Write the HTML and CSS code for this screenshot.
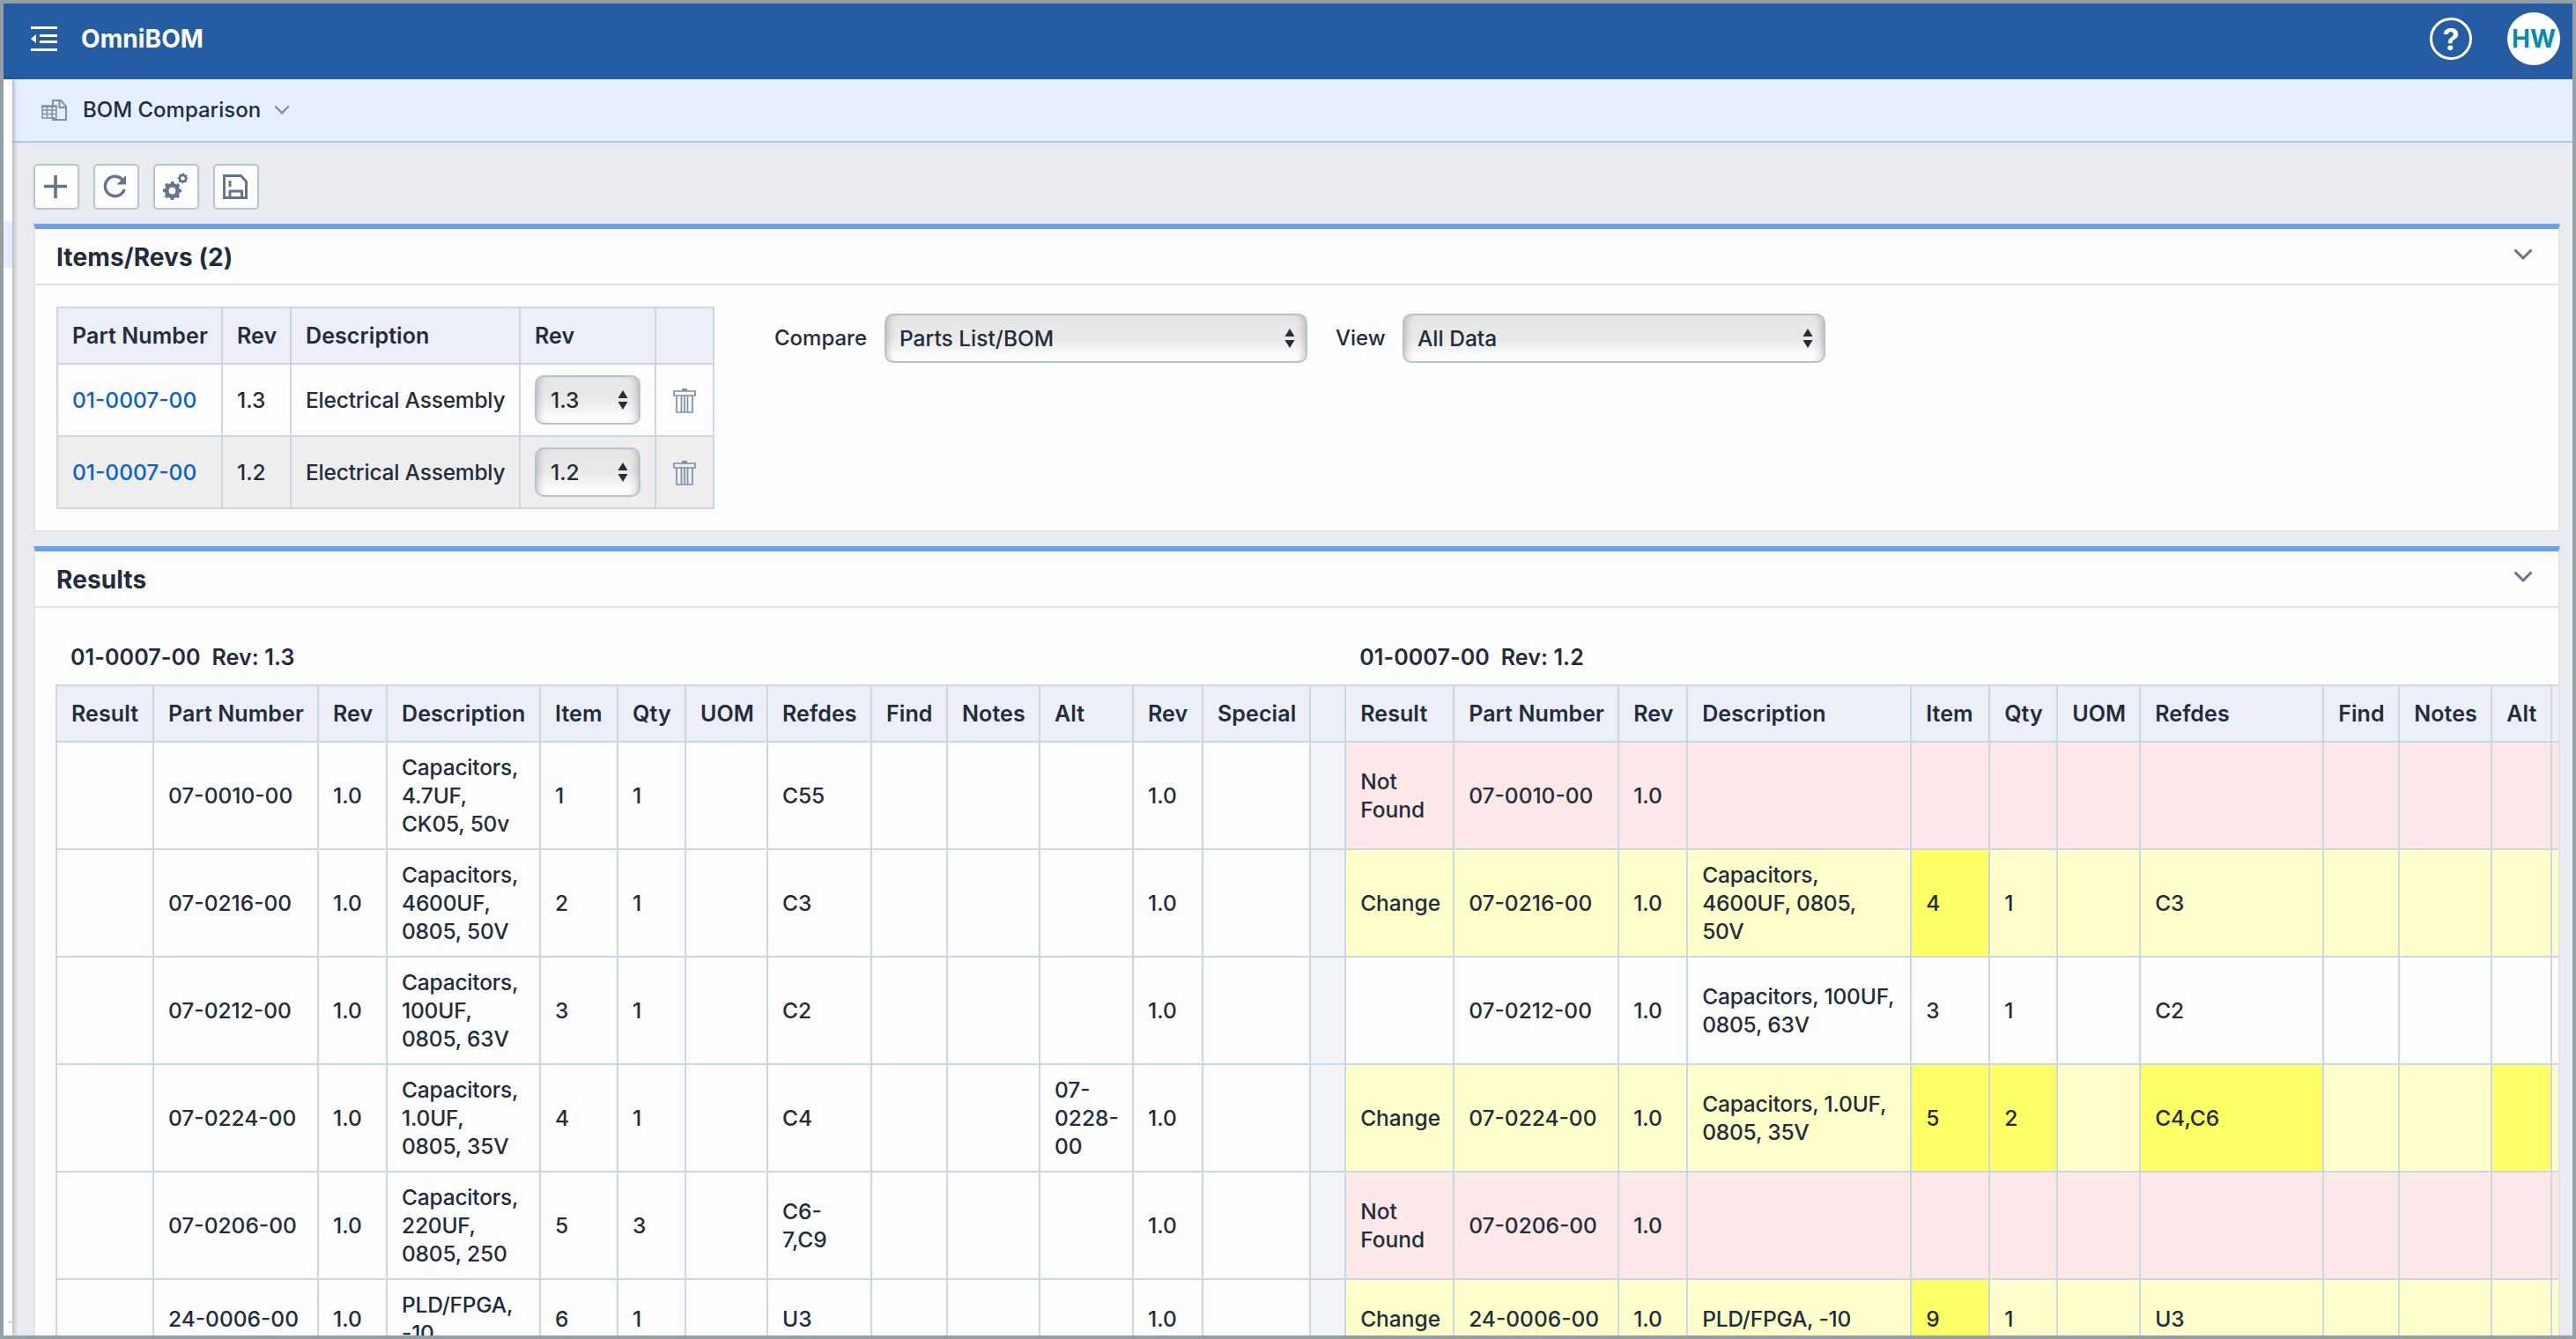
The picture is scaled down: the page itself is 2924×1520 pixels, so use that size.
FILE: index.html
```html
<!DOCTYPE html>
<html lang="en">
<head>
    <meta charset="UTF-8">
    <meta name="viewport" content="width=device-width, initial-scale=1.0">
    <title>BOM Comparison - OmniBOM</title>
    <link rel="stylesheet" href="styles.css">
</head>
<body>

    <!-- Shared icons -->
    <svg class="icon-defs" xmlns="http://www.w3.org/2000/svg">
        <symbol id="icon-chevron" viewBox="0 0 22 14">
            <path d="M1.5 1.5 L11 11 L20.5 1.5" fill="none" stroke="currentColor" stroke-width="3"/>
        </symbol>
        <symbol id="icon-arrows" viewBox="0 0 12 22">
            <path d="M6 0 L11.5 9 H0.5 Z M6 22 L11.5 13 H0.5 Z" fill="currentColor"/>
        </symbol>
        <symbol id="icon-trash" viewBox="0 0 26 28">
            <path d="M1 3 H25 V8 H1 Z M4 8 V27 H22 V8 M9.5 8 V27 M13 8 V27 M16.5 8 V27" fill="none" stroke="currentColor" stroke-width="1.7"/>
            <path d="M10 0 H16 V3 H10 Z" fill="currentColor"/>
        </symbol>
    </svg>

    <header class="header">
        <svg class="menu-icon" viewBox="0 0 30 28" width="30" height="28">
            <path d="M0 0 H30 V3 H0 Z M10 9 H30 V12 H10 Z M10 16 H30 V19 H10 Z M0 25 H30 V28 H0 Z M0 14 L6 9 V19 Z" fill="currentColor"/>
        </svg>
        <h1>OmniBOM</h1>
        <div class="header-right">
            <span class="help">?</span>
            <span class="avatar">HW</span>
        </div>
    </header>

    <div class="layout">
        <aside class="sidebar">
            <div class="sidebar-active"></div>
            <div class="sidebar-line"></div>
        </aside>

        <main class="main">
            <div class="page-bar">
                <svg class="page-icon" viewBox="0 0 30 24" width="30" height="24" fill="none" stroke="currentColor">
                    <path d="M13 7 V1 H22 L28 8 V23 H13 V20" stroke-width="2"/>
                    <path d="M20.5 1 V9 H28" stroke-width="2"/>
                    <path d="M1 7 H17 V21 H1 Z M1 12 H17 M1 16.5 H17 M6.5 8 V21 M12 8 V21" stroke-width="1.5"/>
                    <path d="M0 8 H18" stroke-width="2"/>
                </svg>
                <span class="page-title">BOM Comparison</span>
                <svg class="page-chevron" width="18" height="12"><use href="#icon-chevron"/></svg>
            </div>

            <div class="toolbar">
                <button class="tool-btn" aria-label="Add">
                    <svg viewBox="0 0 48 48" width="48" height="48"><path d="M10 23.5 H36 M23 11 V37" fill="none" stroke="currentColor" stroke-width="3.6"/></svg>
                </button>
                <button class="tool-btn" aria-label="Refresh">
                    <svg viewBox="0 0 48 48" width="48" height="48">
                        <path d="M33.2 27 A11.2 11.2 0 1 1 30.6 15.6" fill="none" stroke="currentColor" stroke-width="3.4"/>
                        <path d="M35 11 V21.5 H24.5 Z" fill="currentColor"/>
                    </svg>
                </button>
                <button class="tool-btn" aria-label="Settings">
                    <svg viewBox="0 0 48 48" width="48" height="48" fill="none" stroke="currentColor">
                        <circle cx="19.5" cy="28.5" r="6.3" stroke-width="4.8"/>
                        <circle cx="19.5" cy="28.5" r="9.2" stroke-width="2.8" stroke-dasharray="3.6 3.62" stroke-dashoffset="1.8"/>
                        <circle cx="31.5" cy="14.5" r="3.6" stroke-width="2.6"/>
                        <circle cx="31.5" cy="14.5" r="5.1" stroke-width="1.6" stroke-dasharray="2 2" stroke-dashoffset="1"/>
                    </svg>
                </button>
                <button class="tool-btn" aria-label="Save">
                    <svg viewBox="0 0 48 48" width="48" height="48" fill="none" stroke="currentColor" stroke-width="3">
                        <path d="M10.5 11.5 H29.5 L35.5 18 V36.5 H10.5 Z M17 36 V29 H30.5 V36 M17 17 V24"/>
                    </svg>
                </button>
            </div>

            <section class="panel">
                <div class="panel-header">
                    <h2>Items/Revs (2)</h2>
                    <svg class="panel-chevron" width="22" height="14"><use href="#icon-chevron"/></svg>
                </div>
                <div class="panel-body items-body">
                    <table class="grid items-grid">
                        <colgroup>
                            <col class="w-187"><col class="w-78"><col class="w-260"><col class="w-154"><col class="w-66">
                        </colgroup>
                        <thead>
                            <tr><th>Part Number</th><th>Rev</th><th>Description</th><th>Rev</th><th></th></tr>
                        </thead>
                        <tbody>
                            <tr>
                                <td><a href="#">01-0007-00</a></td>
                                <td>1.3</td>
                                <td class="desc">Electrical Assembly</td>
                                <td><div class="select select-small">1.3<svg width="12" height="22"><use href="#icon-arrows"/></svg></div></td>
                                <td><svg class="trash" width="26" height="28"><use href="#icon-trash"/></svg></td>
                            </tr>
                            <tr class="even">
                                <td><a href="#">01-0007-00</a></td>
                                <td>1.2</td>
                                <td class="desc">Electrical Assembly</td>
                                <td><div class="select select-small">1.2<svg width="12" height="22"><use href="#icon-arrows"/></svg></div></td>
                                <td><svg class="trash" width="26" height="28"><use href="#icon-trash"/></svg></td>
                            </tr>
                        </tbody>
                    </table>

                    <div class="filters">
                        <span class="filter-label">Compare</span>
                        <div class="select">Parts List/BOM<svg width="12" height="22"><use href="#icon-arrows"/></svg></div>
                        <span class="filter-label view-label">View</span>
                        <div class="select">All Data<svg width="12" height="22"><use href="#icon-arrows"/></svg></div>
                    </div>
                </div>
            </section>

            <section class="panel results-panel">
                <div class="panel-header">
                    <h2>Results</h2>
                    <svg class="panel-chevron" width="22" height="14"><use href="#icon-chevron"/></svg>
                </div>
                <div class="panel-body results-body">
                    <table class="grid results-grid">
                        <colgroup>
                            <col class="w-110"><col class="w-187"><col class="w-78"><col class="w-174"><col class="w-88"><col class="w-77"><col class="w-93"><col class="w-118"><col class="w-86"><col class="w-105"><col class="w-106"><col class="w-79"><col class="w-122">
                            <col class="w-40">
                            <col class="w-123"><col class="w-187"><col class="w-78"><col class="w-254"><col class="w-89"><col class="w-77"><col class="w-94"><col class="w-208"><col class="w-86"><col class="w-105"><col class="w-68"><col class="w-79">
                        </colgroup>
                        <thead>
                            <tr class="rev-titles">
                                <td colspan="14">01-0007-00&nbsp; Rev: 1.3</td>
                                <td colspan="12">01-0007-00&nbsp; Rev: 1.2</td>
                            </tr>
                            <tr>
                                <th>Result</th><th>Part Number</th><th>Rev</th><th>Description</th><th>Item</th><th>Qty</th><th>UOM</th><th>Refdes</th><th>Find</th><th>Notes</th><th>Alt</th><th>Rev</th><th>Special</th>
                                <th></th>
                                <th>Result</th><th>Part Number</th><th>Rev</th><th>Description</th><th>Item</th><th>Qty</th><th>UOM</th><th>Refdes</th><th>Find</th><th>Notes</th><th>Alt</th><th></th>
                            </tr>
                        </thead>
                        <tbody>
                            <tr class="not-found">
                                <td></td><td>07-0010-00</td><td>1.0</td><td class="desc">Capacitors, 4.7UF, CK05, 50v</td><td>1</td><td>1</td><td></td><td>C55</td><td></td><td></td><td></td><td>1.0</td><td></td>
                                <td class="gutter"></td>
                                <td>Not Found</td><td>07-0010-00</td><td>1.0</td><td></td><td></td><td></td><td></td><td></td><td></td><td></td><td></td><td></td>
                            </tr>
                            <tr class="change">
                                <td></td><td>07-0216-00</td><td>1.0</td><td class="desc">Capacitors, 4600UF, 0805, 50V</td><td>2</td><td>1</td><td></td><td>C3</td><td></td><td></td><td></td><td>1.0</td><td></td>
                                <td class="gutter"></td>
                                <td>Change</td><td>07-0216-00</td><td>1.0</td><td class="desc">Capacitors, 4600UF, 0805, 50V</td><td class="diff">4</td><td>1</td><td></td><td>C3</td><td></td><td></td><td></td><td></td>
                            </tr>
                            <tr>
                                <td></td><td>07-0212-00</td><td>1.0</td><td class="desc">Capacitors, 100UF, 0805, 63V</td><td>3</td><td>1</td><td></td><td>C2</td><td></td><td></td><td></td><td>1.0</td><td></td>
                                <td class="gutter"></td>
                                <td></td><td>07-0212-00</td><td>1.0</td><td class="desc">Capacitors, 100UF, 0805, 63V</td><td>3</td><td>1</td><td></td><td>C2</td><td></td><td></td><td></td><td></td>
                            </tr>
                            <tr class="change">
                                <td></td><td>07-0224-00</td><td>1.0</td><td class="desc">Capacitors, 1.0UF, 0805, 35V</td><td>4</td><td>1</td><td></td><td>C4</td><td></td><td></td><td>07-0228-00</td><td>1.0</td><td></td>
                                <td class="gutter"></td>
                                <td>Change</td><td>07-0224-00</td><td>1.0</td><td class="desc">Capacitors, 1.0UF, 0805, 35V</td><td class="diff">5</td><td class="diff">2</td><td></td><td class="diff">C4,C6</td><td></td><td></td><td class="diff"></td><td></td>
                            </tr>
                            <tr class="not-found">
                                <td></td><td>07-0206-00</td><td>1.0</td><td class="desc">Capacitors, 220UF, 0805, 250</td><td>5</td><td>3</td><td></td><td>C6-7,C9</td><td></td><td></td><td></td><td>1.0</td><td></td>
                                <td class="gutter"></td>
                                <td>Not Found</td><td>07-0206-00</td><td>1.0</td><td></td><td></td><td></td><td></td><td></td><td></td><td></td><td></td><td></td>
                            </tr>
                            <tr class="change">
                                <td></td><td>24-0006-00</td><td>1.0</td><td class="desc">PLD/FPGA, -10</td><td>6</td><td>1</td><td></td><td>U3</td><td></td><td></td><td></td><td>1.0</td><td></td>
                                <td class="gutter"></td>
                                <td>Change</td><td>24-0006-00</td><td>1.0</td><td class="desc">PLD/FPGA, -10</td><td class="diff">9</td><td>1</td><td></td><td>U3</td><td></td><td></td><td></td><td></td>
                            </tr>
                        </tbody>
                    </table>
                </div>
            </section>
        </main>
    </div>

</body>
</html>
```
FILE: styles.css
```css
/* Global Styles */
* {
    box-sizing: border-box;
}

body {
    margin: 0;
    height: 1520px;
    border: 4px solid #93a1a7;
    display: flex;
    flex-direction: column;
    overflow: hidden;
    background-color: #eaebf0;
    color: #222c3a;
    font-family: Inter, "Liberation Sans", sans-serif;
    font-size: 24.5px;
    font-weight: 500;
    line-height: 32px;
}

.icon-defs {
    display: none;
}

/* Header */
.header {
    height: 86px;
    flex-shrink: 0;
    display: flex;
    align-items: center;
    padding: 0 14px 6px 31px;
    background: #265ca3;
    color: white;
}

.header h1 {
    margin: 0 0 0 27px;
    font-size: 28px;
    font-weight: 700;
    letter-spacing: 0.1px;
}

.header-right {
    margin-left: auto;
    display: flex;
    align-items: center;
    gap: 40px;
}

.help {
    width: 48px;
    height: 48px;
    border: 3px solid white;
    border-radius: 50%;
    font-size: 34px;
    font-weight: 700;
    line-height: 43px;
    text-align: center;
}

.avatar {
    width: 60px;
    height: 60px;
    border-radius: 50%;
    background: white;
    color: #058cae;
    font-size: 28px;
    font-weight: 700;
    line-height: 61px;
    text-align: center;
}

.layout {
    display: flex;
    flex: 1;
    min-height: 0;
}

/* Collapsed sidebar */
.sidebar {
    width: 10px;
    flex-shrink: 0;
    display: flex;
    flex-direction: column;
    justify-content: space-between;
    padding: 161px 0 14px;
    background: #fdfdfd;
    box-shadow: 0 0 6px rgba(40, 40, 60, 0.55);
    z-index: 1;
}

.sidebar-active {
    height: 53px;
    background: #e4f0ff;
}

.sidebar-line {
    height: 2px;
    margin-left: 5px;
    background: #cad8e4;
}

.main {
    flex: 1;
    min-width: 0;
    display: flex;
    flex-direction: column;
}

.page-bar {
    height: 72px;
    flex-shrink: 0;
    display: flex;
    align-items: center;
    padding: 0 0 0 33px;
    background: #e4f0ff;
    border-bottom: 2px solid #a8cbf5;
}

.page-icon {
    color: #7c90a8;
    margin-top: -1px;
}

.page-title {
    margin: 0 15px 0 17px;
    font-size: 24px;
}

.page-chevron {
    color: #7c90a8;
}

.toolbar {
    display: flex;
    gap: 16px;
    padding: 24px 24px 16px;
}

.tool-btn {
    width: 52px;
    height: 52px;
    padding: 0;
    border: 2px solid #b7c5d2;
    border-radius: 5px;
    background: white;
    color: #64748a;
}

.tool-btn svg {
    display: block;
}

/* Panels */
.panel {
    flex-shrink: 0;
    margin: 0 14px 16px 24px;
    border: 2px solid #e2e2e2;
    border-top: 6px solid #6ba1ec;
    background: #fdfdfd;
}

.panel-header {
    height: 64px;
    display: flex;
    align-items: center;
    justify-content: space-between;
    padding: 0 29px 0 24px;
    border-bottom: 2px solid #e2e2e2;
}

.panel-header h2 {
    margin: 1px 0 0;
    font-size: 28px;
    font-weight: 700;
    letter-spacing: 0.1px;
}

.panel-chevron {
    margin-top: -5px;
    color: #64748a;
}

.items-body {
    display: flex;
    align-items: flex-start;
    padding: 24px 24px 24px;
}

.results-body {
    padding: 24px 1px 0 23px;
    overflow: hidden;
}

/* Tables */
.grid {
    border-collapse: collapse;
    table-layout: fixed;
}

.items-grid {
    width: 747px;
}

.results-grid {
    width: 2913px;
}

.grid th,
.grid td {
    border: 2px solid #cad8e4;
    padding: 12px 8px 12px 16px;
    text-align: left;
    vertical-align: middle;
}

.grid th {
    padding: 15px 0;
    padding-left: 16px;
    background: #eceff7;
    font-size: 25px;
    font-weight: 600;
    letter-spacing: 0.1px;
    white-space: nowrap;
    height: 64px;
}

.grid .desc {
    padding-right: 12px;
    letter-spacing: -0.2px;
}

.grid a {
    color: #0a5fd0;
    text-decoration: none;
}

.grid .even td {
    background: #eeeeee;
}

.grid .rev-titles td {
    height: 64px;
    padding-top: 0;
    padding-bottom: 0;
    border-width: 0 0 2px;
    font-size: 25px;
    font-weight: 600;
    letter-spacing: 0.1px;
}

.trash {
    display: block;
    margin: 2px 0 0 3px;
    color: #7c90a8;
}

/* Comparison states, only for the right hand side */
.gutter {
    background: #f3f4f8;
}

.not-found .gutter ~ td {
    background: #fce8e8;
}

.change .gutter ~ td {
    background: #ffffcb;
}

.change .gutter ~ td.diff {
    background: #ffff66;
}

/* Filters */
.filters {
    display: flex;
    align-items: center;
    padding: 8px 0 0 68px;
}

.filter-label {
    width: 125px;
    font-size: 24px;
}

.view-label {
    width: 76px;
    margin-left: 32px;
}

.select {
    width: 480px;
    height: 56px;
    display: flex;
    align-items: center;
    justify-content: space-between;
    padding: 0 12px 0 15px;
    border: 2px solid #b2c3d2;
    border-radius: 10px;
    background: linear-gradient(#e6e6e6, #e9e9e9 50%, #fdfdfd 90%);
    box-shadow: inset 9px 0 8px -7px rgba(0, 0, 0, 0.22), inset -9px 0 8px -7px rgba(0, 0, 0, 0.22);
}

.select-small {
    width: 120px;
    padding-left: 16px;
}

/* Column widths */
.w-40 { width: 40px; }
.w-66 { width: 66px; }
.w-68 { width: 68px; }
.w-77 { width: 77px; }
.w-78 { width: 78px; }
.w-79 { width: 79px; }
.w-86 { width: 86px; }
.w-88 { width: 88px; }
.w-89 { width: 89px; }
.w-93 { width: 93px; }
.w-94 { width: 94px; }
.w-105 { width: 105px; }
.w-106 { width: 106px; }
.w-110 { width: 110px; }
.w-118 { width: 118px; }
.w-122 { width: 122px; }
.w-123 { width: 123px; }
.w-154 { width: 154px; }
.w-174 { width: 174px; }
.w-187 { width: 187px; }
.w-208 { width: 208px; }
.w-254 { width: 254px; }
.w-260 { width: 260px; }
```
